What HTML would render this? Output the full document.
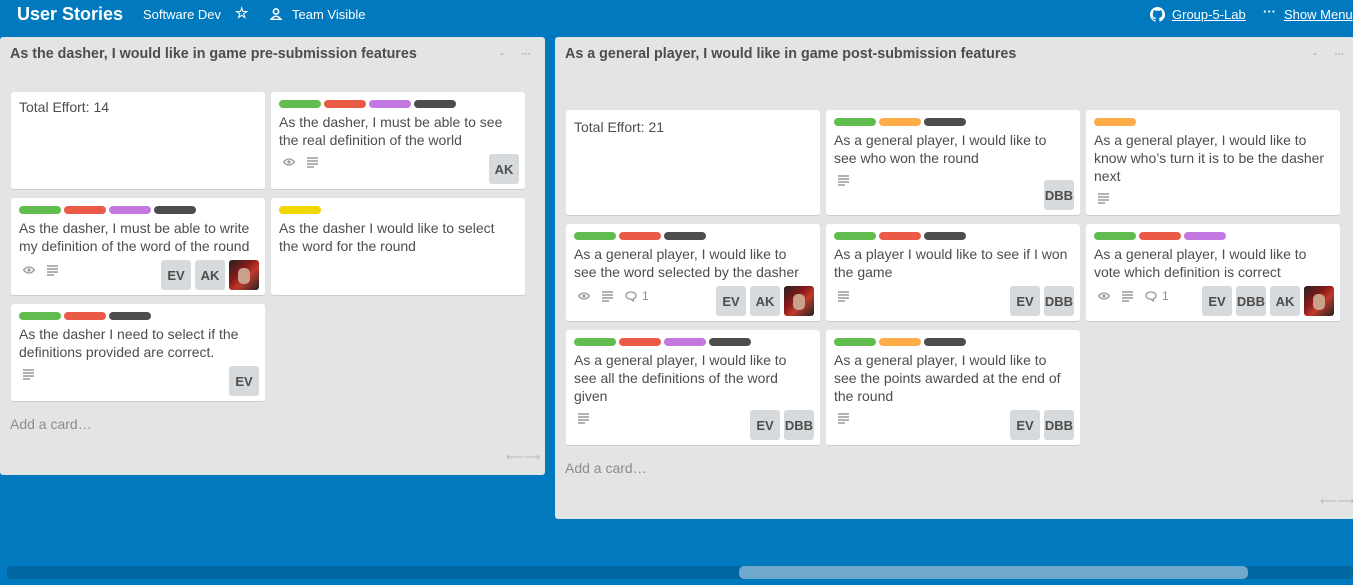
<!DOCTYPE html>
<html><head><meta charset="utf-8"><style>
*{box-sizing:border-box;margin:0;padding:0}
body{width:1353px;height:585px;overflow:hidden;background:#0079bf;font-family:"Liberation Sans",Arial,sans-serif;position:relative}
.a{position:absolute}
.hd{color:#fff}
.list{position:absolute;background:#e2e4e6;border-radius:3px}
.lt{position:absolute;font-weight:bold;font-size:14.3px;color:#4d4d4d}
.dots{position:absolute;color:#999;font-size:12px;letter-spacing:-1px}
.card{position:absolute;background:#fff;border-radius:3px;border-bottom:1px solid #ccc;width:254px}
.lb{position:absolute;top:8px;left:8px;display:flex;gap:3px}
.lb i{display:block;width:42px;height:8px;border-radius:4px}
.g{background:#61bd4f}.r{background:#eb5a46}.p{background:#c377e0}.k{background:#4d4d4d}.y{background:#f2d600}.o{background:#ffab4a}
.tx{position:absolute;left:8px;top:21px;width:237px;font-size:14px;line-height:18px;color:#4d4d4d}
.ic{position:absolute;left:12px;display:flex;gap:12px;align-items:center;color:#8c8c8c;font-size:12px;height:12px}
.ic svg{display:block}
.av{position:absolute;bottom:5px;display:flex;gap:4px;right:6px}
.av b{width:30px;height:30px;background:#d6dadc;border-radius:3px;font-size:13px;color:#4d4d4d;display:flex;align-items:center;justify-content:center}
.av b.im{background:linear-gradient(135deg,#222 0,#8b1a1a 40%,#c0392b 60%,#222 100%);position:relative}
.av b.im:after{content:"";position:absolute;left:9px;top:8px;width:12px;height:16px;border-radius:5px;background:#c9a08a}
.add{position:absolute;font-size:14px;color:#8c8c8c}
</style></head><body>
<svg width="0" height="0" style="position:absolute"><defs>
<symbol id="eye" viewBox="0 0 12 8"><path d="M0.5 4 Q6 -2 11.5 4 Q6 10 0.5 4Z" fill="none" stroke="#999" stroke-width="1.3"/><circle cx="6" cy="4" r="1.6" fill="#999"/></symbol>
<symbol id="ln" viewBox="0 0 11 11"><path d="M0 1H11M0 4H11M0 7H11M0 10H7" stroke="#999" stroke-width="1.4"/></symbol>
<symbol id="cm" viewBox="0 0 12 11"><path d="M6 1C3 1 1 2.6 1 4.6 1 6.6 3 8.2 6 8.2L8.5 10 8.3 7.8C10 7.2 11 6 11 4.6 11 2.6 9 1 6 1Z" fill="none" stroke="#999" stroke-width="1.3"/></symbol>
</defs></svg>
<div class="a hd" style="left:17px;top:4px;font-size:18px;font-weight:bold">User Stories</div>
<div class="a hd" style="left:143px;top:7px;font-size:13px">Software Dev</div>
<div class="a hd" style="left:235px;top:4px;font-size:15px;font-weight:bold">☆</div>
<svg class="a" style="left:270px;top:8px" width="13" height="12" viewBox="0 0 13 12"><circle cx="6" cy="3.5" r="2.6" fill="none" stroke="#fff" stroke-width="1.6"/><path d="M1 11.5 Q6 5 11 11.5Z" fill="none" stroke="#fff" stroke-width="1.6"/></svg>
<div class="a hd" style="left:292px;top:7px;font-size:13px">Team Visible</div>
<svg class="a" style="left:1150px;top:7px" width="15" height="15" viewBox="0 0 16 16"><path fill="#fff" d="M8 0C3.58 0 0 3.58 0 8c0 3.54 2.29 6.53 5.47 7.59.4.07.55-.17.55-.38v-1.33c-2.23.48-2.7-1.07-2.7-1.07-.36-.92-.89-1.17-.89-1.17-.73-.5.06-.49.06-.49.8.06 1.23.83 1.23.83.71 1.22 1.87.87 2.33.66.07-.52.28-.87.51-1.07-1.78-.2-3.64-.89-3.64-3.95 0-.87.31-1.59.82-2.15-.08-.2-.36-1.02.08-2.12 0 0 .67-.21 2.2.82a7.6 7.6 0 0 1 4 0c1.53-1.04 2.2-.82 2.2-.82.44 1.1.16 1.92.08 2.12.51.56.82 1.27.82 2.15 0 3.07-1.87 3.75-3.65 3.95.29.25.54.73.54 1.48v2.2c0 .21.15.46.55.38A8 8 0 0 0 16 8c0-4.42-3.58-8-8-8z"/></svg>
<div class="a hd" style="left:1172px;top:7px;font-size:13px;text-decoration:underline">Group-5-Lab</div>
<div class="a hd" style="left:1263px;top:4px;font-size:13px;font-weight:bold">···</div>
<div class="a hd" style="left:1284px;top:7px;font-size:13px;text-decoration:underline">Show Menu</div>

<div class="list" style="left:0;top:37px;width:545px;height:438px"></div>
<div class="lt" style="left:10px;top:46px">As the dasher, I would like in game pre-submission features</div>
<div class="dots" style="left:500px;top:46px">-</div><div class="dots" style="left:521px;top:46px">···</div>
<div class="list" style="left:555px;top:37px;width:800px;height:482px"></div>
<div class="lt" style="left:565px;top:46px">As a general player, I would like in game post-submission features</div>
<div class="dots" style="left:1313px;top:46px">-</div><div class="dots" style="left:1334px;top:46px">···</div>

<!-- left list -->
<div class="card" style="left:11px;top:92px;height:98px"><div class="tx" style="top:6px">Total Effort: 14</div></div>
<div class="card" style="left:271px;top:92px;height:98px"><div class="lb"><i class="g"></i><i class="r"></i><i class="p"></i><i class="k"></i></div><div class="tx">As the dasher, I must be able to see the real definition of the world</div><div class="ic" style="top:64px"><svg width="12" height="8"><use href="#eye"/></svg><svg width="11" height="11"><use href="#ln"/></svg></div><div class="av"><b>AK</b></div></div>
<div class="card" style="left:11px;top:198px;height:98px"><div class="lb"><i class="g"></i><i class="r"></i><i class="p"></i><i class="k"></i></div><div class="tx">As the dasher, I must be able to write my definition of the word of the round</div><div class="ic" style="top:66px"><svg width="12" height="8"><use href="#eye"/></svg><svg width="11" height="11"><use href="#ln"/></svg></div><div class="av"><b>EV</b><b>AK</b><b class="im"></b></div></div>
<div class="card" style="left:271px;top:198px;height:98px"><div class="lb"><i class="y"></i></div><div class="tx">As the dasher I would like to select the word for the round</div></div>
<div class="card" style="left:11px;top:304px;height:98px"><div class="lb"><i class="g"></i><i class="r"></i><i class="k"></i></div><div class="tx">As the dasher I need to select if the definitions provided are correct.</div><div class="ic" style="top:64px"><svg width="11" height="11"><use href="#ln"/></svg></div><div class="av"><b>EV</b></div></div>
<div class="add" style="left:10px;top:416px">Add a card…</div>
<div class="add" style="left:506px;top:450px;font-size:12px;color:#bbb">⟵⟶</div>

<!-- right list -->
<div class="card" style="left:566px;top:110px;height:106px"><div class="tx" style="top:8px">Total Effort: 21</div></div>
<div class="card" style="left:826px;top:110px;height:106px"><div class="lb"><i class="g"></i><i class="o"></i><i class="k"></i></div><div class="tx">As a general player, I would like to see who won the round</div><div class="ic" style="top:64px"><svg width="11" height="11"><use href="#ln"/></svg></div><div class="av"><b>DBB</b></div></div>
<div class="card" style="left:1086px;top:110px;height:106px"><div class="lb"><i class="o"></i></div><div class="tx">As a general player, I would like to know who’s turn it is to be the dasher next</div><div class="ic" style="top:82px"><svg width="11" height="11"><use href="#ln"/></svg></div></div>
<div class="card" style="left:566px;top:224px;height:98px"><div class="lb"><i class="g"></i><i class="r"></i><i class="k"></i></div><div class="tx">As a general player, I would like to see the word selected by the dasher</div><div class="ic" style="top:66px"><svg width="12" height="8"><use href="#eye"/></svg><svg width="11" height="11"><use href="#ln"/></svg><span style="display:flex;gap:5px;align-items:center"><svg width="12" height="11"><use href="#cm"/></svg>1</span></div><div class="av"><b>EV</b><b>AK</b><b class="im"></b></div></div>
<div class="card" style="left:826px;top:224px;height:98px"><div class="lb"><i class="g"></i><i class="r"></i><i class="k"></i></div><div class="tx">As a player I would like to see if I won the game</div><div class="ic" style="top:66px"><svg width="11" height="11"><use href="#ln"/></svg></div><div class="av"><b>EV</b><b>DBB</b></div></div>
<div class="card" style="left:1086px;top:224px;height:98px"><div class="lb"><i class="g"></i><i class="r"></i><i class="p"></i></div><div class="tx">As a general player, I would like to vote which definition is correct</div><div class="ic" style="top:66px"><svg width="12" height="8"><use href="#eye"/></svg><svg width="11" height="11"><use href="#ln"/></svg><span style="display:flex;gap:5px;align-items:center"><svg width="12" height="11"><use href="#cm"/></svg>1</span></div><div class="av"><b>EV</b><b>DBB</b><b>AK</b><b class="im"></b></div></div>
<div class="card" style="left:566px;top:330px;height:116px"><div class="lb"><i class="g"></i><i class="r"></i><i class="p"></i><i class="k"></i></div><div class="tx">As a general player, I would like to see all the definitions of the word given</div><div class="ic" style="top:82px"><svg width="11" height="11"><use href="#ln"/></svg></div><div class="av"><b>EV</b><b>DBB</b></div></div>
<div class="card" style="left:826px;top:330px;height:116px"><div class="lb"><i class="g"></i><i class="o"></i><i class="k"></i></div><div class="tx">As a general player, I would like to see the points awarded at the end of the round</div><div class="ic" style="top:82px"><svg width="11" height="11"><use href="#ln"/></svg></div><div class="av"><b>EV</b><b>DBB</b></div></div>
<div class="add" style="left:565px;top:460px">Add a card…</div>
<div class="add" style="left:1320px;top:494px;font-size:12px;color:#bbb">⟵⟶</div>

<div class="a" style="left:7px;top:566px;width:1346px;height:13px;background:#0067a3;border-radius:4px"></div>
<div class="a" style="left:739px;top:566px;width:509px;height:13px;background:#6fa8cc;border-radius:5px"></div>
</body></html>
